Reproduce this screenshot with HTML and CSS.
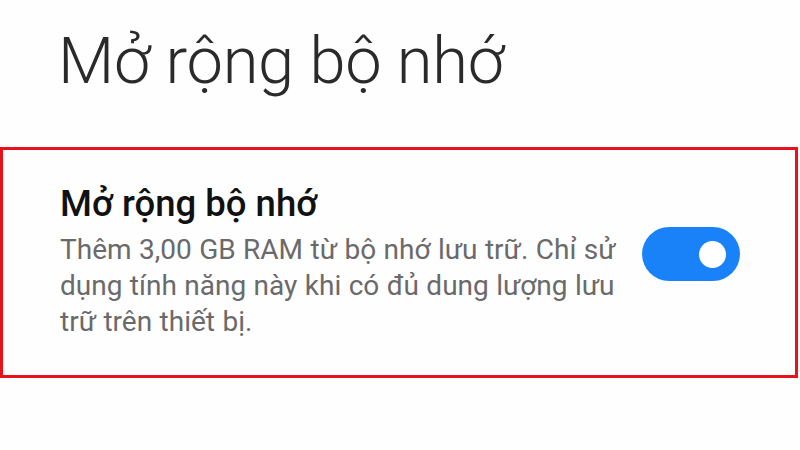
FILE: index.html
```html
<!DOCTYPE html>
<html lang="vi">
<head>
<meta charset="utf-8">
<title>Mở rộng bộ nhớ</title>
<link rel="stylesheet" href="styles.css">
</head>
<body>
  <main class="page">
    <h1 class="page-title">Mở rộng bộ nhớ</h1>
    <section class="setting">
      <div class="setting-text">
        <h2 class="setting-title">Mở rộng bộ nhớ</h2>
        <p class="setting-desc">Thêm 3,00 GB RAM từ bộ nhớ lưu trữ. Chỉ sử dụng tính năng này khi có đủ dung lượng lưu trữ trên thiết bị.</p>
      </div>
      <div class="switch is-on" role="switch" aria-checked="true">
        <span class="switch-knob"></span>
      </div>
    </section>
  </main>
</body>
</html>
```
FILE: styles.css
```css
html, body {
  margin: 0;
  padding: 0;
  background: #fefefe;
}

body {
  width: 800px;
  height: 450px;
  overflow: hidden;
  font-family: Roboto, "Noto Sans", sans-serif;
}

.page {
  display: flex;
  flex-direction: column;
}

.page-title {
  margin: 0;
  padding: 24px 0 0 58px;
  height: 125px;
  box-sizing: border-box;
  font-size: 65px;
  font-weight: 300;
  line-height: 74px;
  color: #2a2a2a;
  letter-spacing: -0.3px;
}

.setting {
  margin-top: 22px;
  width: 798px;
  height: 231px;
  box-sizing: border-box;
  border: 3px solid #e8121c;
  display: flex;
  align-items: flex-start;
  padding: 32px 55px 0 57px;
  gap: 24px;
}

.setting-text {
  flex: 1;
}

.setting-title {
  margin: 0 0 6px;
  font-size: 36.5px;
  font-weight: 500;
  line-height: 44px;
  color: #111;
}

.setting-desc {
  margin: 0;
  font-size: 28px;
  font-weight: 400;
  line-height: 36px;
  color: #6a6a6a;
  word-spacing: 0.5px;
}

.switch {
  margin-top: 45px;
  width: 98px;
  height: 54px;
  border-radius: 27px;
  background: #1a82f8;
  flex: none;
  display: flex;
  align-items: center;
  justify-content: flex-end;
  padding-right: 14px;
  box-sizing: border-box;
}

.switch-knob {
  width: 27px;
  height: 27px;
  border-radius: 50%;
  background: #fff;
}
```
